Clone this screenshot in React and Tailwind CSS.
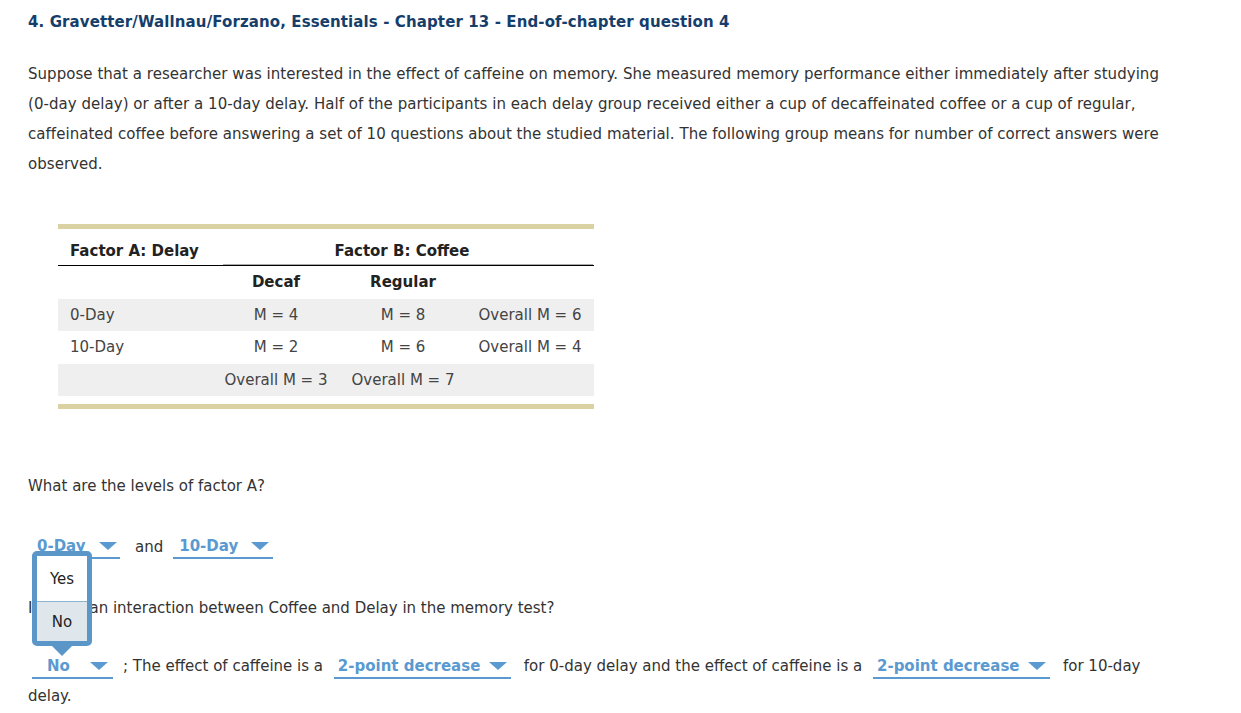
import React from "react";

const Tri = () => (
  <svg width="18" height="8" viewBox="0 0 18 8" className="block">
    <polygon points="0,0 18,0 9,8" fill="#5a9ad0" />
  </svg>
);

function Drop({ text, w, pl = 5, pr = 4, className = "" }) {
  return (
    <span
      className={`inline-flex items-center justify-between h-[24px] border-b-2 border-[#5a9ad0] align-middle ${className}`}
      style={{ width: w, paddingLeft: pl, paddingRight: pr }}
    >
      <span className="font-bold text-[#5a9ad0] text-[15px] leading-[22px] whitespace-nowrap">
        {text}
      </span>
      <Tri />
    </span>
  );
}

const Cell = ({ children, className = "" }) => (
  <div className={`${className}`}>{children}</div>
);

export default function App() {
  return (
    <div
      className="w-[1241px] h-[713px] bg-white text-[#333] overflow-hidden relative"
      style={{ fontFamily: '"DejaVu Sans", Verdana, sans-serif' }}
    >
      <div className="pl-[28px] w-[1185px]">
        <h1 className="pt-[12px] text-[15px] leading-[20px] font-bold text-[#163e6b] tracking-[0.11px]">
          4. Gravetter/Wallnau/Forzano, Essentials - Chapter 13 - End-of-chapter question 4
        </h1>
        <p className="mt-[27px] text-[15px] leading-[30px] tracking-[0.04px]">
          Suppose that a researcher was interested in the effect of caffeine on memory. She measured memory performance either immediately after studying{" "}
          <span className="whitespace-nowrap">(0-day</span> delay) or after a 10-day delay. Half of the participants in each delay group received either a cup of decaffeinated coffee or a cup of regular, caffeinated coffee before answering a set of 10 questions about the studied material. The following group means for number of correct answers were observed.
        </p>

        {/* Table */}
        <div className="mt-[45px] ml-[30px] w-[536px] text-[15px]">
          <div className="h-[5px] bg-[#dbd2a4]" />
          <div className="grid grid-cols-[154px_382px] border-b border-black">
            <div className="pt-[11px] pb-[3px] pl-[12px] leading-[22px] font-bold text-[#222]">
              Factor A: Delay
            </div>
            <div className="pt-[11px] pb-[2px] ml-[11px] mr-[1px] leading-[22px] font-bold text-[#222] text-center border-b border-[#aaa] pr-[12px]">
              Factor B: Coffee
            </div>
          </div>
          <div className="grid grid-cols-[154px_128px_126px_128px] grid-rows-[33px_32px_33px_32px] text-[#444] leading-[32px]">
            <div />
            <div className="leading-[33px] text-center font-bold text-[#222]">Decaf</div>
            <div className="leading-[33px] text-center font-bold text-[#222]">Regular</div>
            <div />

            <Cell className="bg-[#efefef] pl-[12px]">0-Day</Cell>
            <Cell className="bg-[#efefef] text-center">M = 4</Cell>
            <Cell className="bg-[#efefef] text-center">M = 8</Cell>
            <Cell className="bg-[#efefef] text-center">Overall M = 6</Cell>

            <Cell className="pl-[12px] leading-[33px]">10-Day</Cell>
            <Cell className="text-center leading-[33px]">M = 2</Cell>
            <Cell className="text-center leading-[33px]">M = 6</Cell>
            <Cell className="text-center leading-[33px]">Overall M = 4</Cell>

            <Cell className="bg-[#efefef]" />
            <Cell className="bg-[#efefef] text-center">Overall M = 3</Cell>
            <Cell className="bg-[#efefef] text-center">Overall M = 7</Cell>
            <Cell className="bg-[#efefef]" />
          </div>
          <div className="mt-[8px] h-[5px] bg-[#dbd2a4]" />
        </div>

        <p className="mt-[62px] text-[15px] leading-[30px]">What are the levels of factor A?</p>

        <div className="mt-[34px] h-[24px] flex items-center text-[15px]">
          <Drop text="0-Day" w={88} pl={5} pr={3} className="ml-[4px]" />
          <span className="ml-[15px] mr-[10px]">and</span>
          <Drop text="10-Day" w={100} pl={6} pr={4} />
        </div>

        <p className="mt-[34px] text-[15px] leading-[30px]">
          Is there an interaction between Coffee and Delay in the memory test?
        </p>

        <p className="mt-[28px] text-[15px] leading-[30px]">
          <Drop text="No" w={81} pl={15} pr={5} className="ml-[4px] mr-[10px]" />
          ; The effect of caffeine is a{" "}
          <Drop text="2-point decrease" w={177} pl={4} pr={4} className="ml-[6px] mr-[13px]" />
          for 0-day delay and the effect of caffeine is a{" "}
          <Drop text="2-point decrease" w={177} pl={4} pr={4} className="ml-[6px] mr-[13px]" />
          for 10-day delay.
        </p>
      </div>

      {/* Open dropdown popup */}
      <div className="absolute left-[32px] top-[551px] w-[60px]">
        <div className="rounded-[5px] border-[5px] border-[#5a96c8] bg-white overflow-hidden text-[15px] text-[#222]">
          <div className="h-[45px] leading-[46px] text-center">Yes</div>
          <div className="h-[40px] leading-[40px] text-center bg-[#dfe7ec] border-t border-[#8db3d3]">No</div>
        </div>
        <svg width="22" height="11" viewBox="0 0 22 11" className="block mx-auto -mt-[1px]">
          <polygon points="0,0 22,0 11,11" fill="#5a96c8" />
        </svg>
      </div>
    </div>
  );
}
